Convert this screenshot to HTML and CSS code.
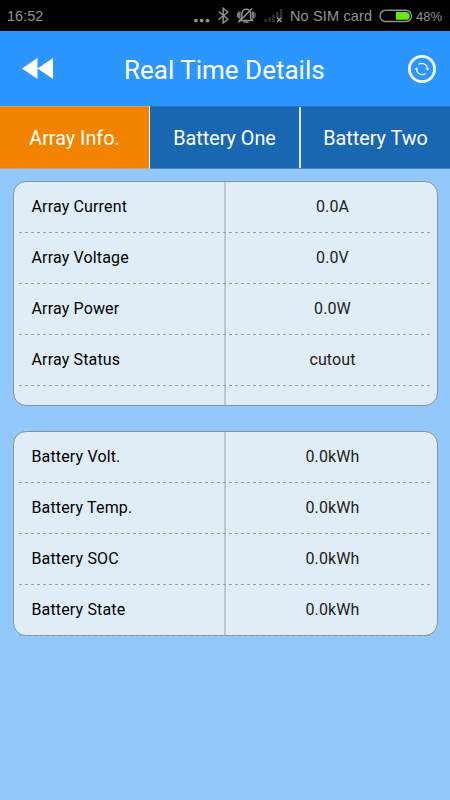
FILE: index.html
```
<!DOCTYPE html>
<html lang="en">
<head>
    <meta charset="UTF-8">
    <meta name="viewport" content="width=device-width, initial-scale=1.0">
    <title>Real Time Details</title>
    <link rel="stylesheet" href="styles.css">
</head>
<body>
    <div class="status-bar">
        <span class="time">16:52</span>
        <svg class="status-icons" width="94" height="31" viewBox="0 0 94 31">
            <!-- more notifications -->
            <g fill="#8f8f8f">
                <circle cx="5.9" cy="20.6" r="1.9"/>
                <circle cx="11.7" cy="20.6" r="1.9"/>
                <circle cx="17.5" cy="20.6" r="1.9"/>
            </g>
            <!-- bluetooth -->
            <path d="M28.600 11.500l9.200 7.800-4.600 3.700V8.300l4.600 3.700-9.200 7.800" fill="none" stroke="#8f8f8f" stroke-width="1.500"/>
            <!-- vibrate -->
            <path d="M49.500 20.500h13l-2-2.500v-4.500a4.300 4.300 0 0 0-8.600 0v4.500z" fill="none" stroke="#8f8f8f" stroke-width="1.500"/>
            <path d="M49.300 11.500v7M63 11.500v7" stroke="#7d7d7d" stroke-width="2.600"/>
            <path d="M47.500 13v4M65 13v4" stroke="#7d7d7d" stroke-width="1.200"/>
            <path d="M53.500 22h5M62 8.500L48.500 22.500" stroke="#8f8f8f" stroke-width="1.500"/>
            <!-- signal -->
            <path d="M75.700 19v3M79.700 17v5M83.500 14.500v7.500M87.300 12v6M91 9v8" stroke="#303030" stroke-width="2.400"/>
            <path d="M87 17.500l4.500 4.500M91.500 17.500l-4.500 4.500" stroke="#a0a0a0" stroke-width="1.400"/>
        </svg>
        <span class="carrier">No SIM card</span>
        <svg class="battery" width="34" height="14" viewBox="0 0 34 14">
            <rect x="1" y="1.200" width="31.500" height="11.400" rx="5.700" fill="none" stroke="#8f8f8f" stroke-width="1.500"/>
            <path d="M17 3h9.800a3.900 3.900 0 0 1 0 7.800H17z" fill="#66e616"/>
        </svg>
        <span class="percent">48%</span>
    </div>

    <div class="header">
        <svg class="back" width="32" height="23" viewBox="0 0 32 23">
            <path d="M0 11.500L15.500 1v21zM15.500 11.500L31 1v21z" fill="#fff"/>
        </svg>
        <h1>Real Time Details</h1>
        <svg class="refresh" width="30" height="30" viewBox="0 0 30 30" fill="none" stroke="#f4f8ff">
            <circle cx="15" cy="15" r="12.600" stroke-width="2.800"/>
            <path d="M11.500 10.600a5.600 5.600 0 0 1 9 4.400M18.500 19.400a5.600 5.600 0 0 1-9-4.400" stroke-width="1.200"/>
            <path d="M18.400 14.500h4.200l-2.100 2.200zM7.400 15.500h4.200l-2.100-2.200z" fill="#f4f8ff" stroke="none"/>
        </svg>
    </div>

    <div class="tabs">
        <div class="tab active"><span>Array Info.</span></div>
        <div class="tab"><span>Battery One</span></div>
        <div class="tab"><span>Battery Two</span></div>
    </div>

    <div class="content">
        <div class="card array-card">
            <div class="row"><div class="label">Array Current</div><div class="value">0.0A</div></div>
            <div class="row"><div class="label">Array Voltage</div><div class="value">0.0V</div></div>
            <div class="row"><div class="label">Array Power</div><div class="value">0.0W</div></div>
            <div class="row"><div class="label">Array Status</div><div class="value">cutout</div></div>
        </div>
        <div class="card battery-card">
            <div class="row"><div class="label">Battery Volt.</div><div class="value">0.0kWh</div></div>
            <div class="row"><div class="label">Battery Temp.</div><div class="value">0.0kWh</div></div>
            <div class="row"><div class="label">Battery SOC</div><div class="value">0.0kWh</div></div>
            <div class="row"><div class="label">Battery State</div><div class="value">0.0kWh</div></div>
        </div>
    </div>
</body>
</html>
```
FILE: styles.css
```
* {
    box-sizing: border-box;
}
body {
    margin: 0;
    height: 800px;
    background-color: #92c8fb;
    font-family: Roboto, sans-serif;
    overflow: hidden;
}
.status-bar {
    display: flex;
    align-items: center;
    height: 31px;
    padding: 0 7px;
    background-color: #000;
    color: #929292;
    font-family: "Liberation Sans", Arial, sans-serif;
    font-size: 14.5px;
    white-space: nowrap;
}
.status-bar span {
    padding-top: 1px;
}
.time {
    width: 183px;
}
.status-icons {
    width: 94px;
    margin-right: 6px;
}
.carrier {
    width: 89px;
    letter-spacing: 0.15px;
}
.battery {
    margin-top: 1px;
}
.percent {
    margin-left: 3px;
    font-size: 13px;
}
.header {
    display: flex;
    align-items: center;
    height: 75px;
    padding: 0 13px 0 22px;
    background-color: #2b96ff;
    color: #fff;
}
.header h1 {
    margin: 3px 0 0 70px;
    font-size: 26px;
    font-weight: 400;
}
.refresh {
    margin-left: auto;
}
.tabs {
    display: grid;
    grid-template-columns: 150px 151px 149px;
    height: 63px;
    border-top: 1px solid #2674c2;
    border-bottom: 1px solid #4588c9;
    background-color: #1966b1;
}
.tab {
    display: flex;
    align-items: center;
    justify-content: center;
    padding-top: 2px;
    border-right: 2px solid #dce8f4;
    color: #fff;
    font-size: 19.8px;
}
.tab.active {
    margin: -1px 0;
    border-top: 1px solid #e59a5c;
    border-bottom: 1px solid #e59a5c;
    border-right: 1px solid #fff;
    background-color: #f28400;
}
.tab:last-child {
    border-right: none;
}
.content {
    padding: 12px 12px 0 13px;
}
.card {
    margin-bottom: 25px;
    border: 1px solid #87939d;
    border-radius: 13px;
    /* column divider */
    background: linear-gradient(#c1c9cf, #c1c9cf) 210px 0 / 2px 100% no-repeat #e0edf6;
}
.array-card {
    height: 225px;
}
.battery-card {
    height: 205px;
}
.row {
    display: flex;
    align-items: center;
    height: 51px;
    padding-bottom: 3px;
    /* dashed line under the row */
    background: repeating-linear-gradient(90deg, #96a2aa 0, #96a2aa 3px, transparent 3px, transparent 6px) 5px 100% / 413px 1px no-repeat;
    color: #000;
    font-size: 16px;
}
.label {
    width: 212px;
    padding-left: 17.5px;
    letter-spacing: 0.15px;
}
.value {
    flex: 1;
    padding-left: 2px;
    text-align: center;
    color: #222;
    letter-spacing: 0.1px;
}
```
